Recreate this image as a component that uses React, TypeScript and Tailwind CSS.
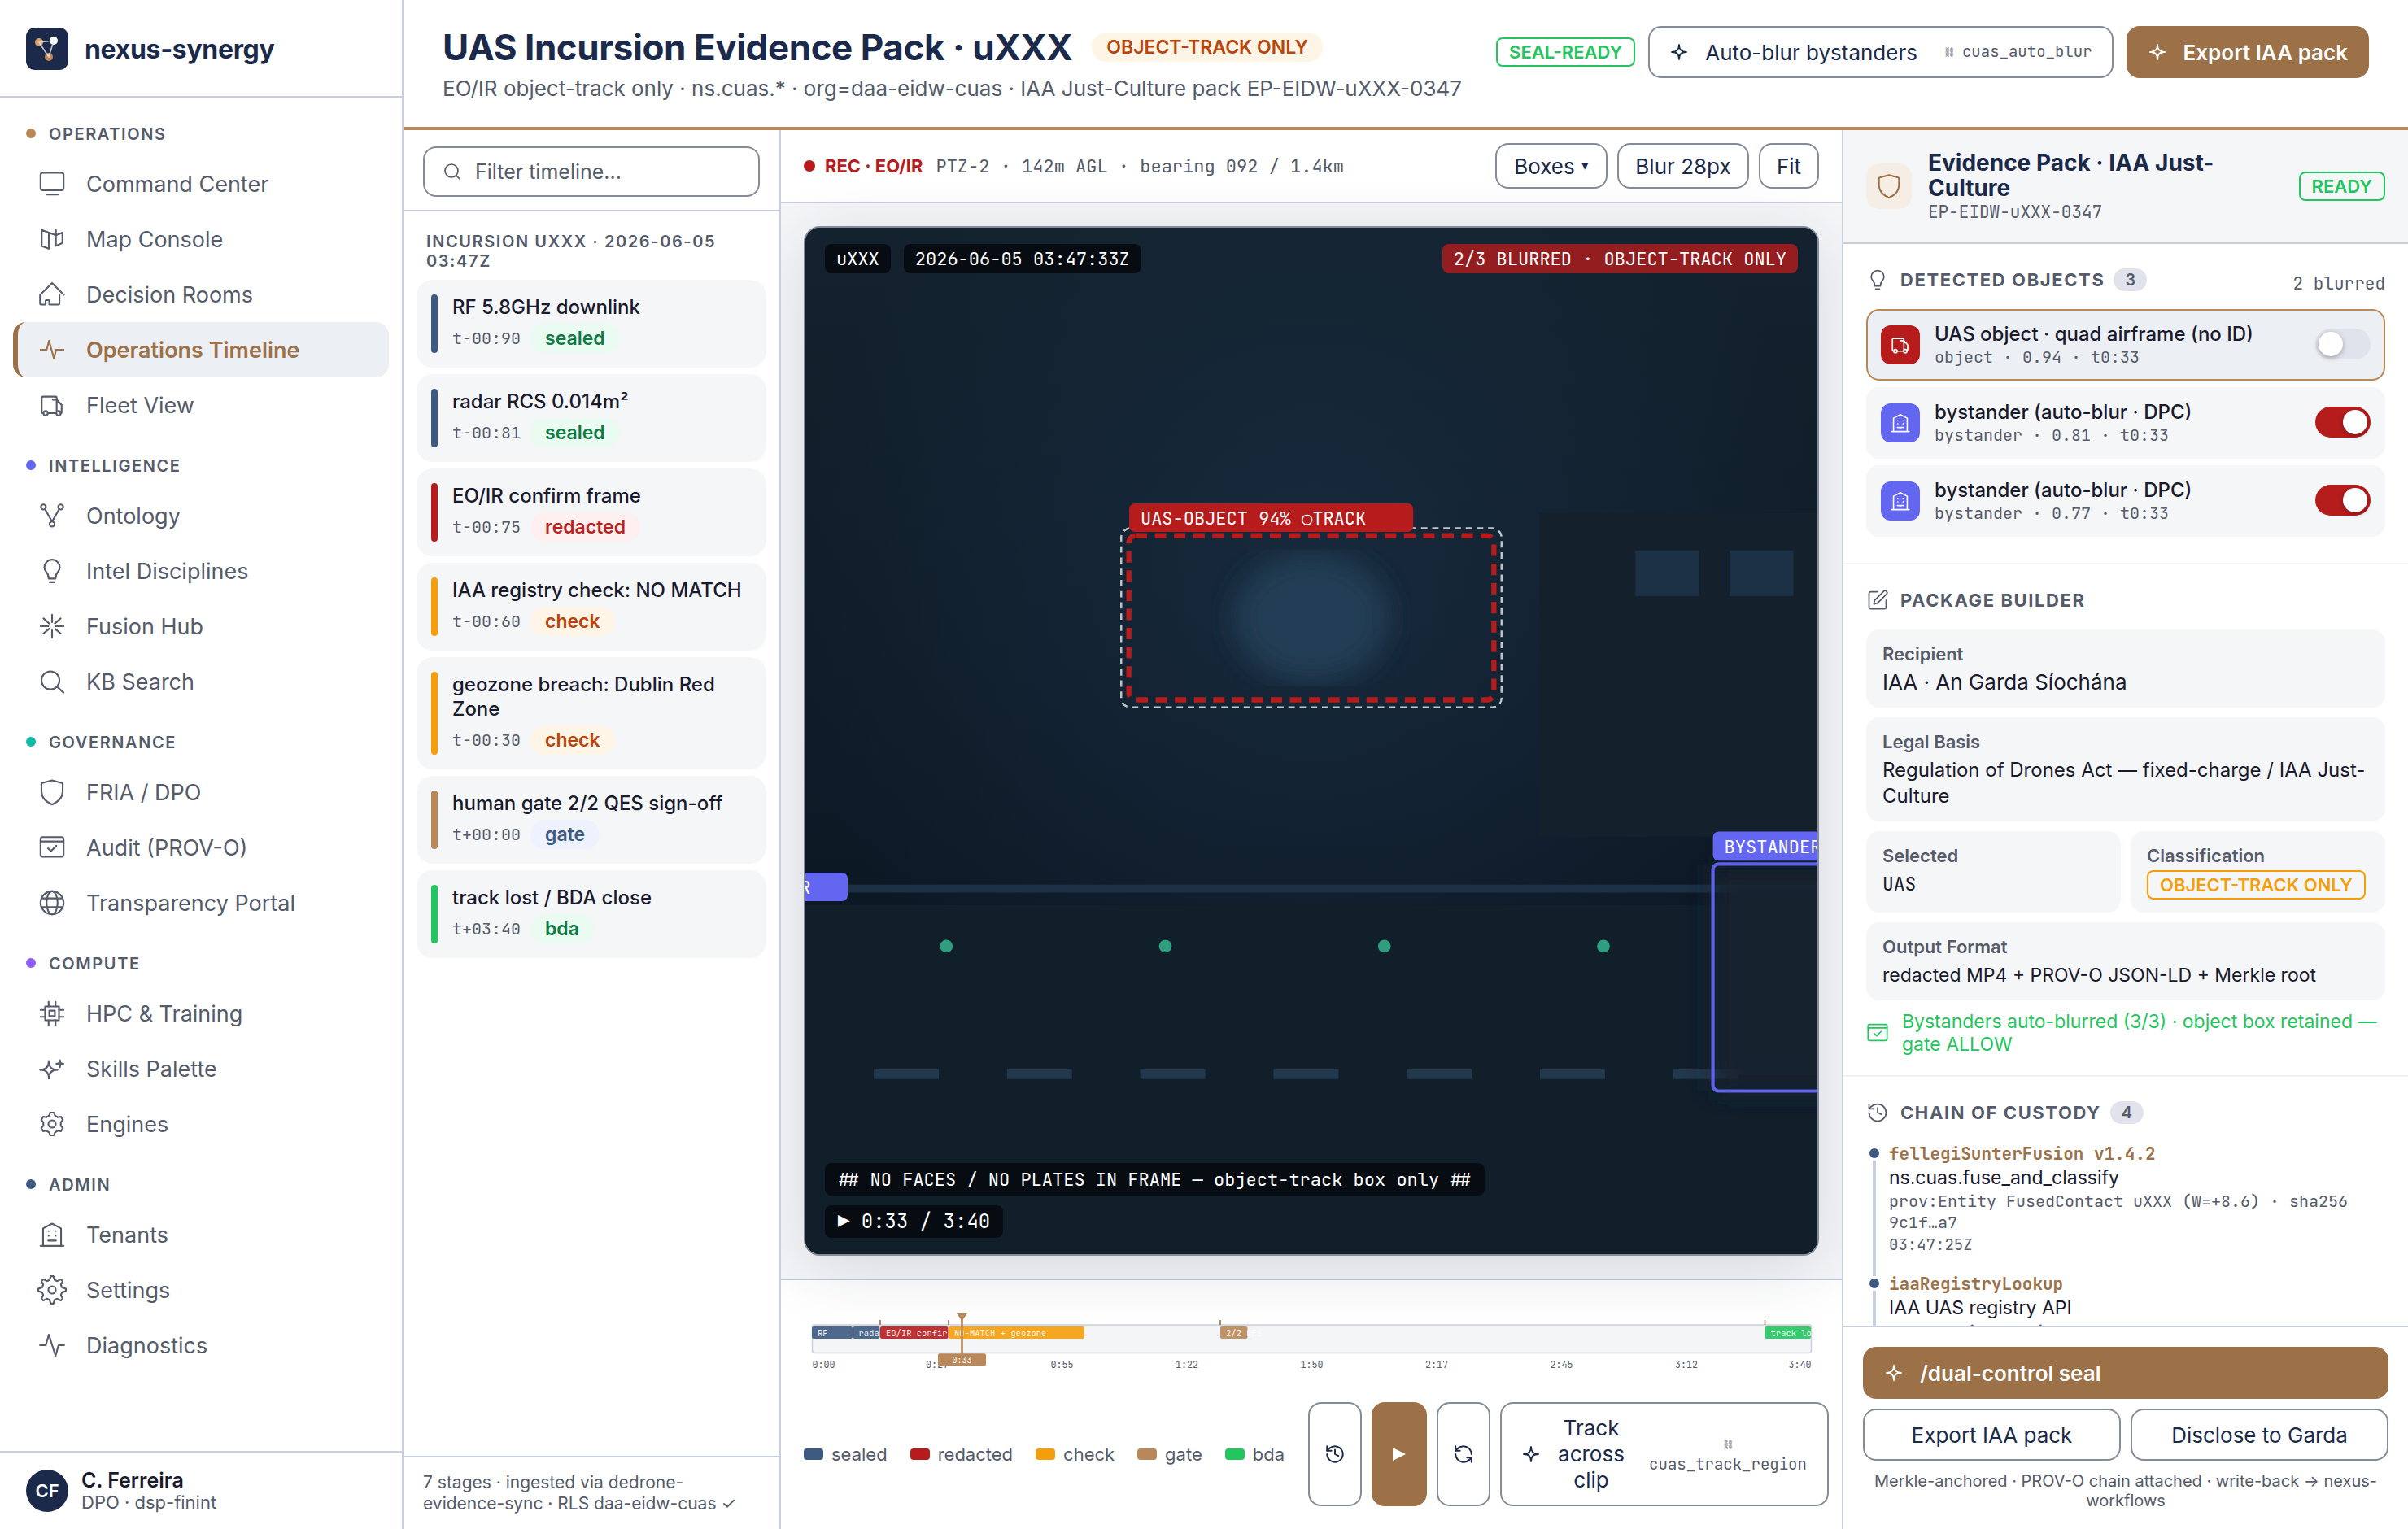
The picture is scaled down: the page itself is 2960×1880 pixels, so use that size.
import type { ReactNode } from 'react'
import { clsx } from 'clsx'
import { History, RefreshCcw, Search, SquarePen } from 'lucide-react'

type IconName =
  | 'screen' | 'map' | 'home' | 'pulse' | 'truck' | 'graph' | 'bulb' | 'fusion' | 'search' | 'shield'
  | 'audit' | 'globe' | 'cpu' | 'sparks' | 'engine' | 'building' | 'gear' | 'activity' | 'spark'

// Rounded cog outline: each tooth is a short flat top between two valleys
function cogPath(teeth: number, outer: number, inner: number, spread: number) {
  const step = (Math.PI * 2) / teeth
  const pt = (r: number, a: number) => `${(12 + r * Math.sin(a)).toFixed(2)} ${(12 - r * Math.cos(a)).toFixed(2)}`
  let d = ''
  for (let i = 0; i < teeth; i++) {
    const a = i * step
    d += `${i ? 'L' : 'M'}${pt(inner, a - step * 0.32)}L${pt(outer, a - step * spread)}L${pt(outer, a + step * spread)}L${pt(inner, a + step * 0.32)}`
  }
  return d + 'Z'
}

const ICONS: Record<IconName, ReactNode> = {
  screen: <><rect x="2" y="2.4" width="20" height="15.2" rx="2" /><path d="M7 21.3h10" /></>,
  map: <path d="M3 4v14l6.2 2.3V6.4L3 4l12.3 4.7L21 6.4v8.9l-5.7 2.6V4" />,
  home: <path d="M22.2 12.3 12 2.1 1.6 12.3V20q0 .8.8.8h4v-3.3q0-.6.6-.6h2q.6 0 .6.6v3.3h8q.8 0 .8-.8v-7.7" />,
  pulse: <path d="M2 12h5.3l2.1-7.8 4.2 15.4 1.9-7.6H22" />,
  truck: (
    <>
      <path d="M4.3 19.1H4q-1 0-1-1V5.8q0-1.1 1.1-1.1h10.8q1.1 0 1.1 1.1v11.3M12.5 7.3H16l4.3 4.7v6q0 1.1-1 1.1M8.3 19.1h7.3" />
      <circle cx="6.4" cy="19.1" r="1.9" />
      <circle cx="17.6" cy="19.1" r="1.9" />
    </>
  ),
  graph: (
    <>
      <circle cx="4.5" cy="4.5" r="2.2" />
      <circle cx="19.5" cy="4.5" r="2.2" />
      <circle cx="12" cy="19.3" r="2.2" />
      <path d="M5.8 6.4 12 17.1l6.2-10.7" />
    </>
  ),
  bulb: <path d="M9 18.6h6M10 21.8h4M9 18.4c0-3.1-.6-3.9-1.8-5.2C6.1 12 5.3 10.7 5.3 8.9a6.7 6.7 0 0 1 13.4 0c0 1.8-.8 3.1-1.9 4.3C15.6 14.5 15 15.3 15 18.4" />,
  fusion: <path d="M12 2v6.5M12 22v-6.5M2 12h6.8M22 12h-6.8M4.6 5.2l5 4.4M19.4 5.2l-5 4.4M4.6 18.2l5-4M19.4 18.2l-5-4" />,
  search: <><circle cx="10.6" cy="11" r="7.8" /><path d="m16.4 16.6 5.6 5" /></>,
  shield: <path d="M12 1.7 20.5 4q.7.2.7 1v6.5c0 5.8-4.2 9-9.2 11.2-5-2.2-9.2-5.4-9.2-11.2V5q0-.8.7-1z" />,
  audit: <><rect x="2" y="3" width="20" height="17" rx="1.8" /><path d="M2 6.8h20M8.5 12.8l2.6 2.3 4.6-4.6" /></>,
  globe: (
    <>
      <circle cx="12" cy="12" r="10" />
      <path d="M3 8.2h18M3 15.8h18" />
      <ellipse cx="12" cy="12" rx="4.8" ry="10" />
    </>
  ),
  cpu: (
    <>
      <rect x="6" y="6" width="12" height="12" />
      <rect x="9.6" y="9.6" width="4.8" height="4.8" />
      <path d="M9 6V2M15 6V2M9 22v-4M15 22v-4M2 9h4M2 15h4M18 9h4M18 15h4" />
    </>
  ),
  sparks: (
    <>
      <path d="M1.5 13c5.3 0 7.7-2.3 7.7-7.7 0 5.4 2.3 7.7 7.6 7.7-5.3 0-7.6 2.3-7.6 7.6 0-5.3-2.4-7.6-7.7-7.6Z" />
      <path d="M15.8 7.7c2.1 0 3-.9 3-3 0 2.1.9 3 3 3-2.1 0-3 .9-3 3 0-2.1-.9-3-3-3Z" />
    </>
  ),
  engine: <><path d={cogPath(6, 10, 7.7, 0.16)} /><circle cx="12" cy="12" r="3.2" /></>,
  building: <path d="M2 21.8h20M4.2 21.6V6.6L12 2.5l7.8 4.1v15M8.6 17.2h6.8M9 9h.1M15 9h.1M9 13h.1M15 13h.1" />,
  gear: <><path d={cogPath(8, 12, 8.9, 0.12)} /><circle cx="12" cy="12" r="3.2" /></>,
  activity: <path d="M1.5 12h5L9.2 2.8 15 21.2l2.6-9.2h4.9" />,
  spark: <path d="M3 12c6.27 0 9-2.64 9-9 0 6.36 2.71 9 9 9-6.29 0-9 2.71-9 9 0-6.29-2.73-9-9-9Z" />,
}

function Icon({ name, className }: { name: IconName; className?: string }) {
  return (
    <svg
      viewBox="0 0 24 24"
      fill="none"
      stroke="currentColor"
      strokeWidth={name === 'spark' ? 1.9 : 1.5}
      strokeLinecap="round"
      strokeLinejoin="round"
      className={clsx('shrink-0 overflow-visible', className)}
    >
      {ICONS[name]}
    </svg>
  )
}

interface NavGroup {
  label: string
  dot: string
  items: [string, IconName][]
}

const NAV: NavGroup[] = [
  {
    label: 'OPERATIONS',
    dot: 'bg-[#b98758]',
    items: [['Command Center', 'screen'], ['Map Console', 'map'], ['Decision Rooms', 'home'], ['Operations Timeline', 'pulse'], ['Fleet View', 'truck']],
  },
  {
    label: 'INTELLIGENCE',
    dot: 'bg-[#6366f1]',
    items: [['Ontology', 'graph'], ['Intel Disciplines', 'bulb'], ['Fusion Hub', 'fusion'], ['KB Search', 'search']],
  },
  {
    label: 'GOVERNANCE',
    dot: 'bg-[#14b8a6]',
    items: [['FRIA / DPO', 'shield'], ['Audit (PROV-O)', 'audit'], ['Transparency Portal', 'globe']],
  },
  {
    label: 'COMPUTE',
    dot: 'bg-[#8b5cf6]',
    items: [['HPC & Training', 'cpu'], ['Skills Palette', 'sparks'], ['Engines', 'engine']],
  },
  {
    label: 'ADMIN',
    dot: 'bg-[#3d5a80]',
    items: [['Tenants', 'building'], ['Settings', 'gear'], ['Diagnostics', 'activity']],
  },
]

function Sidebar() {
  return (
    <aside className="flex w-[496px] shrink-0 flex-col border-r-2 border-[#c9d0dc] bg-white">
      <div className="flex h-[120px] shrink-0 items-center gap-5 border-b-2 border-[#c9ccdb] px-8 pt-0.5">
        <svg viewBox="0 0 52 52" className="size-[52px]">
          <rect width="52" height="52" rx="11" fill="#1b2a4a" />
          <circle cx="16" cy="18" r="5" fill="#d4a06c" />
          <circle cx="34" cy="16" r="5" fill="#fff" />
          <circle cx="28" cy="36" r="5" fill="#b98758" />
          <path d="M16 18 34 16 28 36Z" fill="none" stroke="#e2e5ec" strokeWidth="1.7" strokeOpacity="0.8" strokeLinejoin="round" />
        </svg>
        <span className="pt-0.5 text-[32px] font-bold tracking-[-0.01em] text-[#1b2a4a]">nexus-synergy</span>
      </div>

      <nav className="flex-1 px-4 pt-1">
        {NAV.map((group) => (
          <div key={group.label}>
            <div className="flex h-[68px] items-center gap-4 px-4 pt-3">
              <span className={clsx('size-3 rounded-full', group.dot)} />
              <span className="pt-0.5 text-xl font-semibold tracking-[0.08em] text-[#555b6a]">{group.label}</span>
            </div>
            {group.items.map(([label, icon]) => {
              const active = label === 'Operations Timeline'
              return (
                <div
                  key={label}
                  className={clsx(
                    'flex h-[68px] items-center gap-6 rounded-2xl border-l-[6px] pl-6 text-[27px]',
                    active ? 'border-[#9c7148] bg-[#eceff4] font-semibold text-[#9c7148]' : 'border-transparent text-[#555b6a]',
                  )}
                >
                  <span className="flex size-9 items-center justify-center">
                    <Icon name={icon} className="size-[34px]" />
                  </span>
                  <span className="pt-0.5">{label}</span>
                </div>
              )
            })}
          </div>
        ))}
      </nav>

      <div className="flex h-24 shrink-0 items-center gap-4 border-t-2 border-[#c9d0dc] px-8">
        <div className="flex size-[52px] items-center justify-center rounded-full bg-[#1b2a4a] text-[22px] font-semibold text-white">CF</div>
        <div className="leading-7">
          <div className="text-[25px] font-semibold text-[#1a1a2e]">C. Ferreira</div>
          <div className="-mt-px text-[22px] text-[#555b6a]">DPO · dsp-finint</div>
        </div>
      </div>
    </aside>
  )
}

function OutlineTag({ tone, children }: { tone: 'green' | 'amber'; children: ReactNode }) {
  return (
    <span
      className={clsx(
        'flex h-9 w-fit shrink-0 items-center rounded-lg border-[2.5px] px-3.5 text-[22px] font-semibold whitespace-nowrap',
        tone === 'green' ? 'border-[#22c55e] text-[#22c55e]' : 'border-[#f59e0b] text-[#f59e0b]',
      )}
    >
      {children}
    </span>
  )
}

function PageHeader() {
  return (
    <header className="flex h-40 shrink-0 items-start justify-between border-b-4 border-[#b98758] bg-white pt-8 pr-12 pl-12">
      <div>
        <div className="flex h-[52px] items-center gap-6">
          <h1 className="text-[44px] font-bold tracking-[-0.01em] text-[#1b2a4a]">UAS Incursion Evidence Pack · uXXX</h1>
          <span className="flex h-9 items-center rounded-full bg-[#fff5e6] px-[18px] text-[23px] font-semibold text-[#b8460b]">OBJECT-TRACK ONLY</span>
        </div>
        <p className="mt-[5px] text-[26px] leading-10 text-[#555b6a]">
          EO/IR object-track only · ns.cuas.* · org=daa-eidw-cuas · IAA Just-Culture pack EP-EIDW-uXXX-0347
        </p>
      </div>
      <div className="flex h-16 items-center gap-4">
        <OutlineTag tone="green">SEAL-READY</OutlineTag>
        <button className="flex h-16 items-center rounded-2xl border-2 border-[#858b99] px-6 text-[26px] text-[#1b2a4a]">
          <Icon name="spark" className="mr-5 size-6" />
          Auto-blur bystanders
          <span className="ml-8 flex items-center gap-2.5 font-[JetBrains_Mono,DejaVu_Sans_Mono,monospace] text-[19px] text-[#555b6a]">
            <span className="w-[13px] text-[11.5px]">⛓</span>
            cuas_auto_blur
          </span>
        </button>
        <button className="flex h-16 items-center gap-5 rounded-2xl bg-[#9c7148] px-[26px] text-[26px] font-semibold text-white">
          <Icon name="spark" className="size-6" />
          Export IAA pack
        </button>
      </div>
    </header>
  )
}

const CHIP = {
  green: 'bg-[#eafcf1] text-[#0f7a43]',
  red: 'bg-[#fef0f0] text-[#b8231f]',
  amber: 'bg-[#fff5e6] text-[#b8460b]',
  blue: 'bg-[#eef2ff] text-[#3d5a80]',
}

const STAGES: { title: string; t: string; state: string; chip: keyof typeof CHIP; bar: string }[] = [
  { title: 'RF 5.8GHz downlink', t: 't-00:90', state: 'sealed', chip: 'green', bar: 'bg-[#3d5a80]' },
  { title: 'radar RCS 0.014m²', t: 't-00:81', state: 'sealed', chip: 'green', bar: 'bg-[#3d5a80]' },
  { title: 'EO/IR confirm frame', t: 't-00:75', state: 'redacted', chip: 'red', bar: 'bg-[#b71c1c]' },
  { title: 'IAA registry check: NO MATCH', t: 't-00:60', state: 'check', chip: 'amber', bar: 'bg-[#f59e0b]' },
  { title: 'geozone breach: Dublin Red Zone', t: 't-00:30', state: 'check', chip: 'amber', bar: 'bg-[#f59e0b]' },
  { title: 'human gate 2/2 QES sign-off', t: 't+00:00', state: 'gate', chip: 'blue', bar: 'bg-[#b98758]' },
  { title: 'track lost / BDA close', t: 't+03:40', state: 'bda', chip: 'green', bar: 'bg-[#22c55e]' },
]

function StageList() {
  return (
    <section className="flex w-[464px] shrink-0 flex-col border-r-2 border-[#c9d0dc] bg-white">
      <div className="h-[100px] shrink-0 border-b-2 border-[#c9ccdb] px-6 pt-5">
        <div className="flex h-[62px] items-center gap-4 rounded-2xl border-2 border-[#858b99] px-[22px] text-[25px] text-[#555b6a]">
          <Search className="size-6" strokeWidth={1.7} />
          <span className="pt-0.5">Filter timeline...</span>
        </div>
      </div>
      <div className="flex flex-1 flex-col gap-2 px-4 pt-[25px]">
        <h2 className="mb-[3px] px-3 text-xl leading-6 font-semibold tracking-[0.08em] text-[#555b6a]">
          INCURSION UXXX · 2026-06-05 03:47Z
        </h2>
        {STAGES.map((s) => (
          <div key={s.title} className="flex gap-[18px] rounded-[20px] bg-[#f5f6f8] p-[18px]">
            <span className={clsx('w-2 shrink-0 rounded', s.bar)} />
            <div>
              <div className="pt-px text-[24px] leading-[30px] font-medium text-[#1a1a2e]">{s.title}</div>
              <div className="mt-[5px] flex items-center gap-3">
                <span className="font-[JetBrains_Mono,DejaVu_Sans_Mono,monospace] text-xl text-[#555b6a]">{s.t}</span>
                <span className={clsx('flex h-9 items-center rounded-full px-[18px] text-[23px] font-semibold', CHIP[s.chip])}>{s.state}</span>
              </div>
            </div>
          </div>
        ))}
      </div>
      <p className="h-[90px] shrink-0 border-t-2 border-[#c9d0dc] px-6 pt-[18px] text-[21px] leading-[26px] text-[#555b6a]">
        7 stages · ingested via dedrone-evidence-sync · RLS daa-eidw-cuas ✓
      </p>
    </section>
  )
}

function VideoScene() {
  return (
    <svg viewBox="0 0 1600 900" preserveAspectRatio="xMidYMid slice" className="absolute inset-0 size-full font-[JetBrains_Mono,DejaVu_Sans_Mono,monospace]">
      <defs>
        <linearGradient id="sky" x1="0" y1="0" x2="0" y2="1">
          <stop offset="0" stopColor="#13222e" />
          <stop offset="1" stopColor="#0d1825" />
        </linearGradient>
        <radialGradient id="glow" cx="800" cy="315" r="460" gradientUnits="userSpaceOnUse">
          <stop offset="0" stopColor="#1a3046" stopOpacity="0.65" />
          <stop offset="1" stopColor="#1a3046" stopOpacity="0" />
        </radialGradient>
        <clipPath id="blurArea">
          <rect x="712" y="282" width="176" height="120" />
        </clipPath>
        <filter id="soft" x="-50%" y="-50%" width="200%" height="200%">
          <feGaussianBlur stdDeviation="12" />
        </filter>
      </defs>
      <rect width="1600" height="594" fill="url(#sky)" />
      <rect width="1600" height="594" fill="url(#glow)" />
      <rect y="594" width="1600" height="306" fill="#111f2b" />
      <rect y="576" width="1600" height="7" fill="#1c3146" />
      <rect x="1000" y="250" width="320" height="284" fill="#14212d" />
      <rect x="1084" y="283" width="56" height="40" fill="#1c3146" />
      <rect x="1166.5" y="283" width="56" height="40" fill="#1c3146" />
      {[480, 672, 864, 1056].map((x) => (
        <circle key={x} cx={x} cy="630" r="5.6" fill="#2f9e7e" />
      ))}
      {[416.4, 533.2, 650, 766.8, 883.6, 1000.4, 1117.2].map((x) => (
        <rect key={x} x={x} y="738" width="57" height="8.5" fill="#22384d" />
      ))}

      {/* tracked airframe */}
      <g clipPath="url(#blurArea)">
        <ellipse cx="800" cy="342" rx="68" ry="56" fill="#203d54" filter="url(#soft)" />
      </g>
      <rect x="633.3" y="263.5" width="333.4" height="157" rx="8" fill="none" stroke="#fff" strokeOpacity="0.75" strokeWidth="1.7" strokeDasharray="5.6 4.2" />
      <rect x="640" y="270" width="320" height="144" rx="6" fill="none" stroke="#b71c1c" strokeWidth="4.5" strokeDasharray="10 6.8" />
      <rect x="640.3" y="241.7" width="249" height="25" rx="5" fill="#b71c1c" />
      <text x="650.2" y="260" fontSize="15.69" fill="#fff">UAS-OBJECT 94% ○TRACK</text>

      {/* bystanders, both cut by the frame edge */}
      <rect x="1152" y="558" width="128" height="199" fill="#14222f" filter="url(#soft)" />
      <rect x="1152" y="558" width="128" height="199" rx="5" fill="none" stroke="#6366f1" strokeOpacity="0.95" strokeWidth="3" />
      <rect x="1152" y="529.5" width="249" height="25.5" rx="5" fill="#6366f1" />
      <text x="1162" y="548.3" fontSize="15.69" fill="#fff">BYSTANDER</text>
      <rect x="144.5" y="565.5" width="249" height="25" rx="5" fill="#6366f1" />
      <text x="361" y="583.8" fontSize="15.69" fill="#fff" textAnchor="end">BLUR</text>
    </svg>
  )
}

function VideoFrame() {
  return (
    <div className="relative flex h-full flex-col justify-between overflow-hidden rounded-[20px] border-2 border-[#858b99] bg-[#111f2b] px-6 py-5 font-[JetBrains_Mono,DejaVu_Sans_Mono,monospace] text-[22px] text-white shadow-[0_16px_80px_rgba(27,42,74,0.14)]">
      <VideoScene />
      <div className="relative flex justify-between">
        <div className="flex gap-4">
          <span className="flex h-9 items-center rounded-lg bg-[#070c13] px-3.5">uXXX</span>
          <span className="flex h-9 items-center rounded-lg bg-[#070c13] px-3.5">2026-06-05 03:47:33Z</span>
        </div>
        <span className="flex h-9 items-center rounded-lg bg-[#941d20] px-3.5">2/3 BLURRED · OBJECT-TRACK ONLY</span>
      </div>
      <div className="relative flex flex-col items-start gap-3">
        <span className="flex h-10 items-center rounded-lg bg-[#070c13] px-4">## NO FACES / NO PLATES IN FRAME — object-track box only ##</span>
        <span className="flex h-10 items-center rounded-lg bg-[#070c13] px-4 text-2xl">▶ 0:33 / 3:40</span>
      </div>
    </div>
  )
}

const SEGMENTS = [
  { x: 10, w: 50, label: 'RF', fill: '#3d5a80' },
  { x: 60.5, w: 33, label: 'rada', fill: '#3d5a80' },
  { x: 94, w: 83.5, label: 'EO/IR confir', fill: '#b71c1c' },
  { x: 178, w: 167, label: 'NO-MATCH + geozone', fill: '#f59e0b' },
  { x: 512, w: 33.5, label: '2/2 QES', fill: '#b98758' },
  { x: 1181.5, w: 56.5, label: 'track lo', fill: '#22c55e' },
]
const TICKS = ['0:00', '0:27', '0:55', '1:22', '1:50', '2:17', '2:45', '3:12', '3:40']

function Track() {
  return (
    <svg viewBox="0 0 1248 96" className="h-24 w-[1248px] shrink-0 font-[JetBrains_Mono,DejaVu_Sans_Mono,monospace]">
      <rect x="10.5" y="29" width="1228" height="34.5" rx="3" fill="#f4f5f7" stroke="#cbd0da" strokeWidth="1.5" />
      {[94, 178, 512, 1181.5].map((x) => (
        <rect key={x} x={x - 0.8} y="23" width="1.6" height="6" fill="#9c7148" />
      ))}
      {SEGMENTS.map((s) => (
        <g key={s.x}>
          <rect x={s.x} y="31" width={s.w} height="15" rx="2" fill={s.fill} fillOpacity="0.9" />
          <text x={s.x + 7} y="42.5" fontSize="10.5" fill="#fff" fillOpacity="0.92">{s.label}</text>
        </g>
      ))}
      {TICKS.map((t, i) => (
        <text
          key={t}
          x={10.5 + i * 153.5}
          y="82"
          fontSize="11.7"
          fill="#555b6a"
          textAnchor={i === 0 ? 'start' : i === 8 ? 'end' : 'middle'}
        >
          {t}
        </text>
      ))}
      <rect x="193.2" y="15" width="2.6" height="50" fill="#b98758" />
      <path d="M188 15h13l-6.5 9z" fill="#b98758" />
      <rect x="165" y="64.3" width="59" height="15" rx="2" fill="#b98758" />
      <text x="194.5" y="75.7" fontSize="10" fill="#fff" textAnchor="middle">0:33</text>
    </svg>
  )
}

const LEGEND = [
  ['sealed', 'bg-[#3d5a80]'],
  ['redacted', 'bg-[#b71c1c]'],
  ['check', 'bg-[#f59e0b]'],
  ['gate', 'bg-[#b98758]'],
  ['bda', 'bg-[#22c55e]'],
]

function Player() {
  return (
    <section className="flex flex-1 flex-col overflow-hidden bg-[#f5f6f8]">
      <div className="flex h-[90px] shrink-0 items-center border-b-2 border-[#c9ccdb] bg-white px-7 text-[22px]">
        <span className="size-3.5 rounded-full bg-[#b71c1c]" />
        <span className="ml-3 font-bold text-[#b71c1c]">REC · EO/IR</span>
        <span className="ml-4 font-[JetBrains_Mono,DejaVu_Sans_Mono,monospace] text-[#555b6a]">PTZ-2 · 142m AGL · bearing 092 / 1.4km</span>
        <div className="ml-auto flex gap-3 text-[26px] text-[#1b2a4a]">
          <button className="flex h-14 w-[138px] items-center justify-center gap-2 rounded-2xl border-2 border-[#858b99] bg-white">
            Boxes <span className="text-[17px]">▾</span>
          </button>
          <button className="flex h-14 w-[162px] items-center justify-center rounded-2xl border-2 border-[#858b99] bg-white">Blur 28px</button>
          <button className="flex h-14 w-[74px] items-center justify-center rounded-2xl border-2 border-[#858b99] bg-white">Fit</button>
        </div>
      </div>

      <div className="min-h-0 flex-1 p-7">
        <VideoFrame />
      </div>

      <div className="flex h-[308px] shrink-0 flex-col justify-between border-t-2 border-[#c3cad6] bg-white pt-[26px] pr-4 pb-7 pl-7">
        <Track />
        <div className="flex h-32 items-center justify-between text-[#1b2a4a]">
          <div className="flex gap-7 text-[22px] text-[#555b6a]">
            {LEGEND.map(([label, color]) => (
              <span key={label} className="flex items-center gap-2.5">
                <span className={clsx('h-3.5 w-6 rounded', color)} />
                {label}
              </span>
            ))}
          </div>
          <div className="flex h-full gap-3">
            <button className="flex w-[66px] items-center justify-center rounded-2xl border-2 border-[#858b99]">
              <History className="size-[26px]" strokeWidth={1.8} />
            </button>
            <button className="flex w-[68px] items-center justify-center rounded-2xl bg-[#9c7148]">
              <svg viewBox="0 0 16 16" className="size-4"><path d="M0 0 16 8 0 16Z" fill="#fff" /></svg>
            </button>
            <button className="flex w-[66px] items-center justify-center rounded-2xl border-2 border-[#858b99]">
              <RefreshCcw className="size-[26px]" strokeWidth={1.8} />
            </button>
            <button className="flex w-[404px] items-center rounded-2xl border-2 border-[#858b99] px-6 text-[26px] leading-[32px]">
              <Icon name="spark" className="mr-5 size-6" />
              <span className="w-[84px]">Track across clip</span>
              <span className="ml-auto flex w-[196px] flex-col items-center font-[JetBrains_Mono,DejaVu_Sans_Mono,monospace] text-[19px] leading-[25px] text-[#555b6a]">
                <span className="text-[11.5px]">⛓</span>
                cuas_track_region
              </span>
            </button>
          </div>
        </div>
      </div>
    </section>
  )
}

function SectionTitle({ icon, title, count, aside }: { icon: ReactNode; title: string; count?: number; aside?: string }) {
  return (
    <div className="mb-[22px] flex h-7 items-center text-[#555b6a]">
      {icon}
      <h3 className="ml-3.5 text-[22px] font-bold tracking-[1.6px]">{title}</h3>
      {count && <span className="ml-[11px] flex h-7 items-center rounded-full bg-[#e0e3eb] px-3.5 text-xl font-semibold">{count}</span>}
      {aside && <span className="mt-2.5 ml-auto font-[JetBrains_Mono,DejaVu_Sans_Mono,monospace] text-[21px]">{aside}</span>}
    </div>
  )
}

function Field({ label, className, children }: { label: string; className?: string; children: ReactNode }) {
  return (
    <div className={clsx('rounded-2xl bg-[#f5f6f8] px-5 py-4 leading-8 text-[#1a1a2e]', className)}>
      <div className="mb-1 text-[22px] leading-7 font-semibold text-[#555b6a]">{label}</div>
      {children}
    </div>
  )
}

const OBJECTS = [
  { title: 'UAS object · quad airframe (no ID)', meta: 'object · 0.94 · t0:33', uas: true },
  { title: 'bystander (auto-blur · DPC)', meta: 'bystander · 0.81 · t0:33', uas: false },
  { title: 'bystander (auto-blur · DPC)', meta: 'bystander · 0.77 · t0:33', uas: false },
]

const CHAIN = [
  { agent: 'fellegiSunterFusion v1.4.2', activity: 'ns.cuas.fuse_and_classify', entity: 'prov:Entity FusedContact uXXX (W=+8.6) · sha256 9c1f…a7', at: '03:47:25Z' },
  { agent: 'iaaRegistryLookup', activity: 'IAA UAS registry API', entity: 'prov:Entity registry NO-MATCH · sha256 4b22…10', at: '03:47:29Z' },
]

function EvidencePanel() {
  return (
    <aside className="flex w-[696px] shrink-0 flex-col border-l-2 border-[#c9d0dc] bg-white">
      <div className="flex h-[140px] shrink-0 items-center border-b-2 border-[#c8ced8] bg-[#f5f6f8] px-7">
        <div className="flex size-14 shrink-0 items-center justify-center rounded-2xl bg-[#f6eee4] text-[#9c7148]">
          <Icon name="shield" className="size-8" />
        </div>
        <div className="mr-5 ml-5 flex-1 pt-0.5">
          <h2 className="text-[28px] leading-[30.8px] font-bold text-[#1b2a4a]">Evidence Pack · IAA Just-Culture</h2>
          <div className="font-[JetBrains_Mono,DejaVu_Sans_Mono,monospace] text-[21px] leading-7 text-[#555b6a]">EP-EIDW-uXXX-0347</div>
        </div>
        <OutlineTag tone="green">READY</OutlineTag>
      </div>

      <div className="min-h-0 flex-1 overflow-hidden">
        <div className="flex flex-col gap-2 border-b-2 border-[#f1f2f4] px-7 pt-[30px] pb-8">
          <div className="-mb-2">
            <SectionTitle icon={<Icon name="bulb" className="size-7" />} title="DETECTED OBJECTS" count={3} aside="2 blurred" />
          </div>
          {OBJECTS.map((o, i) => (
            <div
              key={i}
              className={clsx(
                'flex h-[88px] items-center rounded-2xl border-2 px-4',
                o.uas ? 'border-[#b98758] bg-[#eceff4]' : 'border-[#f5f6f8] bg-[#f5f6f8]',
              )}
            >
              <span className={clsx('flex size-12 items-center justify-center rounded-xl text-white', o.uas ? 'bg-[#b71c1c]' : 'bg-[#6366f1]')}>
                <Icon name={o.uas ? 'truck' : 'building'} className="size-[26px]" />
              </span>
              <div className="ml-[18px] pt-0.5 leading-7">
                <div className="text-[24px] font-medium text-[#1a1a2e]">{o.title}</div>
                <div className="font-[JetBrains_Mono,DejaVu_Sans_Mono,monospace] text-xl leading-7 text-[#555b6a]">{o.meta}</div>
              </div>
              <span className={clsx('mb-0.5 ml-auto flex h-[38px] w-[68px] items-center rounded-full px-1', o.uas ? 'bg-[#e0e3eb]' : 'justify-end bg-[#b71c1c]')}>
                <span className="size-[30px] rounded-full bg-white shadow-[0_2px_6px_rgba(0,0,0,0.3)]" />
              </span>
            </div>
          ))}
        </div>

        <div className="border-b-2 border-[#f1f2f4] px-7 pt-[30px] pb-6">
          <SectionTitle icon={<SquarePen className="size-7" strokeWidth={1.5} />} title="PACKAGE BUILDER" />
          <div className="grid grid-cols-2 gap-3">
            <Field label="Recipient" className="col-span-2 text-[26px]">
              <div className="-mb-px pt-px">IAA · An Garda Síochána</div>
            </Field>
            <Field label="Legal Basis" className="col-span-2 text-[24px]">
              <div className="-mb-px pt-px">Regulation of Drones Act — fixed-charge / IAA Just-Culture</div>
            </Field>
            <Field label="Selected">
              <div className="-mb-px pt-px font-[JetBrains_Mono,DejaVu_Sans_Mono,monospace] text-[23px]">UAS</div>
            </Field>
            <Field label="Classification">
              <OutlineTag tone="amber">OBJECT-TRACK ONLY</OutlineTag>
            </Field>
            <Field label="Output Format" className="col-span-2 text-[23px]">
              <div className="-mb-px pt-px">redacted MP4 + PROV-O JSON-LD + Merkle root</div>
            </Field>
          </div>
          <div className="mt-3 flex items-center gap-4 text-[23px] leading-7 text-[#22c55e]">
            <Icon name="audit" className="size-7" />
            Bystanders auto-blurred (3/3) · object box retained — gate ALLOW
          </div>
        </div>

        <div className="px-7 pt-[30px]">
          <SectionTitle icon={<History className="size-7" strokeWidth={1.5} />} title="CHAIN OF CUSTODY" count={4} />
          {CHAIN.map((c) => (
            <div key={c.agent} className="flex">
              <div className="flex w-5 flex-col items-center">
                <span className="mt-2 mb-[3px] size-3 shrink-0 rounded-full bg-[#3d5a80]" />
                <span className="-mb-[5px] w-1 flex-1 bg-[#c9d0dc]" />
              </div>
              <div className="ml-2 flex-1 pt-px pb-[18px] font-[JetBrains_Mono,DejaVu_Sans_Mono,monospace] text-[#555b6a]">
                <div className="text-[21px] leading-7 font-semibold text-[#9c7148]">{c.agent}</div>
                <div className="font-[Inter,sans-serif] text-[23px] leading-[31px] text-[#1a1a2e]">{c.activity}</div>
                <div className="text-xl leading-[26px]">{c.entity}</div>
                <div className="text-[19px] leading-[30px]">{c.at}</div>
              </div>
            </div>
          ))}
        </div>
      </div>

      <div className="grid h-[250px] shrink-0 grid-cols-2 content-start gap-3 border-t-2 border-[#c8ced8] bg-white p-6 text-[26px] text-[#1b2a4a]">
        <button className="col-span-2 flex h-16 items-center gap-5 rounded-2xl bg-[#9c7148] px-[26px] font-semibold text-white">
          <Icon name="spark" className="size-6" />
          /dual-control seal
        </button>
        <button className="h-16 rounded-2xl border-2 border-[#858b99]">Export IAA pack</button>
        <button className="h-16 rounded-2xl border-2 border-[#858b99]">Disclose to Garda</button>
        <p className="col-span-2 pt-px text-center text-xl leading-6 text-[#555b6a]">
          Merkle-anchored · PROV-O chain attached · write-back → nexus-workflows
        </p>
      </div>
    </aside>
  )
}

export default function App() {
  return (
    <div className="flex h-[1880px] w-[2960px] overflow-hidden bg-white font-[Inter,sans-serif]">
      <Sidebar />
      <main className="flex min-w-0 flex-1 flex-col">
        <PageHeader />
        <div className="flex min-h-0 flex-1">
          <StageList />
          <Player />
          <EvidencePanel />
        </div>
      </main>
    </div>
  )
}
